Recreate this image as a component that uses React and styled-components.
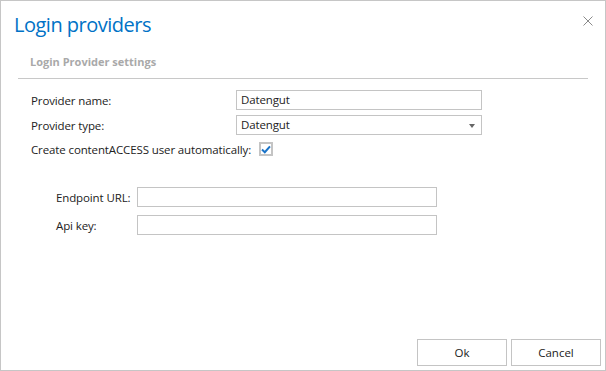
import React from "react";
import styled, { createGlobalStyle } from "styled-components";

const Global = createGlobalStyle`
  html, body { margin: 0; padding: 0; background: #fff; }
  body { font-family: "Open Sans", "Noto Sans", sans-serif; }
  * { box-sizing: border-box; }
`;

const Dialog = styled.div`
  width: 606px;
  height: 371px;
  border: 1px solid #c6c6c6;
  background: #fff;
  display: flex;
  flex-direction: column;
`;

const Header = styled.div`
  display: flex;
  justify-content: space-between;
  align-items: flex-start;
  padding: 11px 12px 0 13px;
  height: 53px;
`;

const Title = styled.h1`
  margin: 0;
  font-weight: 400;
  font-size: 20px;
  line-height: 26px;
  color: #0072c6;
  letter-spacing: -0.5px;
`;

const Close = styled.button`
  border: 0;
  background: none;
  padding: 0;
  margin-top: 4px;
  width: 10px;
  height: 10px;
  cursor: pointer;
  display: flex;
`;

const Section = styled.div`
  margin: 0 17px;
`;

const SectionTitle = styled.div`
  font-size: 11px;
  font-weight: 700;
  color: #a9a9a9;
  line-height: 15px;
  padding: 0 0 9px 12px;
  border-bottom: 1px solid #c8c8c8;
`;

const Form = styled.div`
  padding: 11px 0 0 13px;
  display: flex;
  flex-direction: column;
  gap: 5px;
`;

const Row = styled.div`
  display: flex;
  align-items: center;
  height: 20px;
`;

const Label = styled.label`
  width: ${(p) => (p.$w ? `${p.$w}px` : "auto")};
  flex: none;
  font-size: 11.5px;
  letter-spacing: -0.12px;
  color: #222;
  white-space: nowrap;
`;

const Input = styled.div`
  width: ${(p) => p.$w}px;
  height: 20px;
  border: 1px solid #c4c4c4;
  font-size: 11.5px;
  letter-spacing: -0.12px;
  color: #222;
  padding: 0 4px;
  line-height: 18px;
  position: relative;
`;

const Arrow = styled.span`
  position: absolute;
  right: 6px;
  top: 8px;
  width: 0;
  height: 0;
  border-left: 3.5px solid transparent;
  border-right: 3.5px solid transparent;
  border-top: 4px solid #666;
`;

const CheckRow = styled(Row)`
  height: 14px;
  margin-top: 2px;
  gap: 8px;
`;

const CheckBox = styled.span`
  width: 14px;
  height: 14px;
  border: 2px solid #c4c4c4;
  display: flex;
  align-items: center;
  justify-content: center;
  background: #fff;
`;

const SubForm = styled.div`
  margin-top: 26px;
  padding-left: 25px;
  display: flex;
  flex-direction: column;
  gap: 8px;
`;

const Footer = styled.div`
  margin-top: auto;
  display: flex;
  justify-content: flex-end;
  gap: 4px;
  padding: 0 4px 4px 0;
`;

const Button = styled.button`
  width: 90px;
  height: 27px;
  border: 1px solid #c4c4c4;
  background: #fff;
  font-family: inherit;
  font-size: 11.5px;
  color: #222;
  padding: 0;
`;

export default function App() {
  return (
    <>
      <Global />
      <Dialog>
        <Header>
          <Title>Login providers</Title>
          <Close aria-label="Close">
            <svg width="10" height="10" viewBox="0 0 10 10">
              <path d="M0.5 0.5 L9.5 9.5 M9.5 0.5 L0.5 9.5" stroke="#8a8a8a" strokeWidth="1" />
            </svg>
          </Close>
        </Header>
        <Section>
          <SectionTitle>Login Provider settings</SectionTitle>
          <Form>
            <Row>
              <Label $w={205}>Provider name:</Label>
              <Input $w={246}>Datengut</Input>
            </Row>
            <Row>
              <Label $w={205}>Provider type:</Label>
              <Input $w={246}>
                Datengut
                <Arrow />
              </Input>
            </Row>
            <CheckRow>
              <Label as="span">Create contentACCESS user automatically:</Label>
              <CheckBox>
                <svg width="10" height="9" viewBox="0 0 10 9">
                  <path d="M1 4.5 L3.8 7.2 L9 1.3" stroke="#1a73c8" strokeWidth="2" fill="none" />
                </svg>
              </CheckBox>
            </CheckRow>
            <SubForm>
              <Row>
                <Label $w={81}>Endpoint URL:</Label>
                <Input $w={300} />
              </Row>
              <Row>
                <Label $w={81}>Api key:</Label>
                <Input $w={300} />
              </Row>
            </SubForm>
          </Form>
        </Section>
        <Footer>
          <Button>Ok</Button>
          <Button>Cancel</Button>
        </Footer>
      </Dialog>
    </>
  );
}
